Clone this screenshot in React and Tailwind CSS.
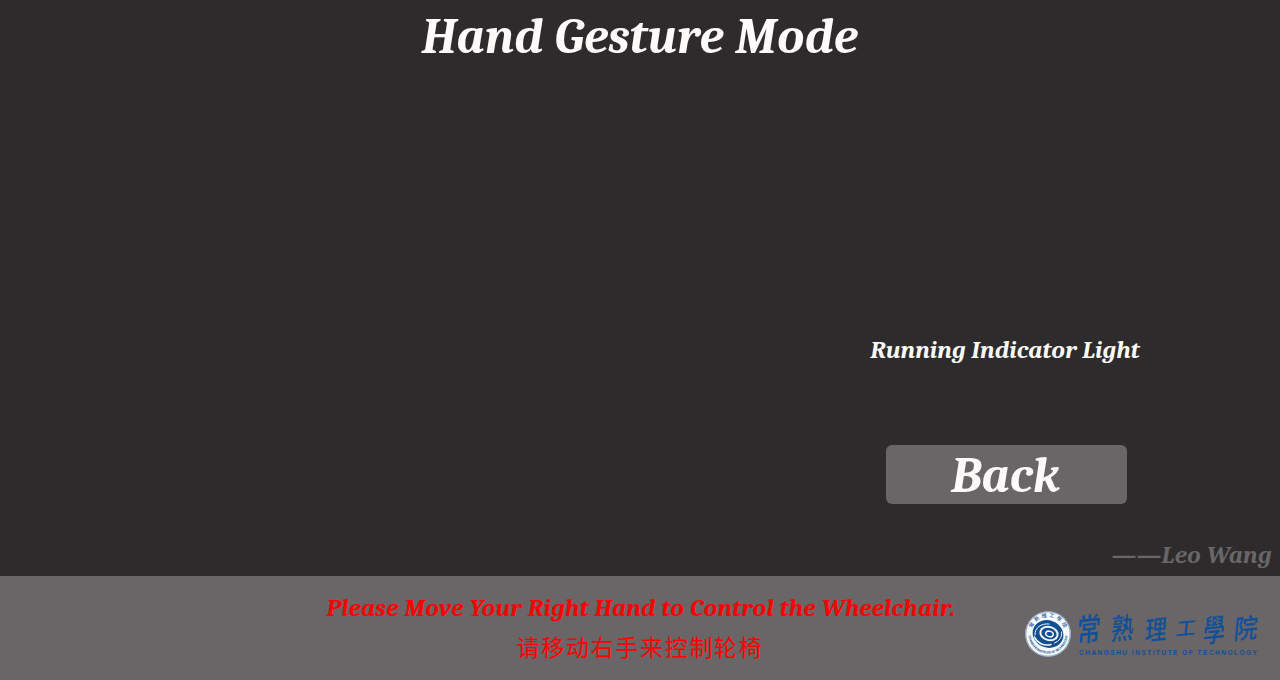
const logoChars = [
  { char: "常", style: "w-[34px] text-[24px] -rotate-6 scale-y-130" },
  { char: "熟", style: "w-[34px] text-[23px] -rotate-6 scale-y-125" },
  { char: "理", style: "w-[31px] text-[22px] -rotate-6 scale-y-120" },
  { char: "工", style: "w-[27px] text-[20px] -rotate-6 scale-y-95" },
  { char: "學", style: "w-[31px] text-[22px] -rotate-6 scale-y-140" },
  { char: "院", style: "w-[25px] text-[24px] -rotate-6 scale-y-110" },
];

function Seal() {
  return (
    <svg width="46" height="46" viewBox="0 0 46 46" className="shrink-0">
      <defs>
        <path id="sealTop" d="M6 23a17 17 0 0 1 34 0" />
        <path id="sealBottom" d="M3.400 23a19.600 19.600 0 0 0 39.200 0" />
      </defs>
      <circle cx="23" cy="23" r="22.800" fill="#f7fafc" />
      <circle cx="23" cy="23" r="22.200" fill="none" stroke="#4d7cab" strokeWidth="0.700" />
      <text fill="#17508f" fontSize="5" fontWeight="500" fontFamily="Noto Sans CJK TC, sans-serif">
        <textPath href="#sealTop" startOffset="50%" textAnchor="middle" textLength="41">常熟理工學院</textPath>
      </text>
      <text fill="#17508f" fontSize="3.300" fontWeight="700" fontFamily="Liberation Sans, sans-serif">
        <textPath href="#sealBottom" startOffset="50%" textAnchor="middle" textLength="58">CHANGSHU INSTITUTE OF TECHNOLOGY</textPath>
      </text>
      <ellipse cx="23" cy="23" rx="15.600" ry="13.600" fill="#124f90" transform="rotate(20 23 23)" />
      <g fill="none" stroke="#f4f8fb" strokeLinecap="round">
        <path d="M10 24c-.5-7 6-12 14-11" strokeWidth="1" />
        <path d="M9.500 26c2.500 6 9.500 9.500 16.500 7.500" strokeWidth="1.500" />
        <path d="M36.500 21c1 5-2 9-7 11" strokeWidth="1" />
        <ellipse cx="24" cy="22.500" rx="8.800" ry="6.600" strokeWidth="2" transform="rotate(15 24 22.500)" />
        <ellipse cx="24.500" cy="23" rx="3.800" ry="2.700" strokeWidth="1.500" transform="rotate(15 24.500 23)" />
      </g>
    </svg>
  );
}

function Logo() {
  return (
    <div className="flex h-12 items-start gap-1.5 text-[#10509a]">
      <Seal />
      <div className="w-[182px]">
        <div className="flex h-[31px] items-center font-['Noto_Sans_CJK_TC',sans-serif] leading-none font-medium">
          {logoChars.map(({ char, style }) => (
            <span key={char} className={style}>
              <span className="inline-block -skew-x-12">{char}</span>
            </span>
          ))}
        </div>
        <div className="pt-[7px] pl-0.5 font-['Liberation_Sans',sans-serif] text-[6.500px] leading-[8px] font-bold tracking-[1.5px] whitespace-nowrap">
          CHANGSHU INSTITUTE OF TECHNOLOGY
        </div>
      </div>
    </div>
  );
}

export default function App() {
  return (
    <div className="flex h-[680px] w-[1280px] flex-col overflow-hidden bg-[#2d2b2c] font-['Cambria','Caladea','Liberation_Serif',serif] font-bold text-[#fdfbf9] italic">
      <h1 className="pt-[9px] text-center text-[50px] leading-[56px] tracking-[0.2px]">Hand Gesture Mode</h1>
      <main className="flex flex-1 flex-col items-end">
        <div className="mt-[270px] mr-[137px] flex w-[273px] flex-col items-center">
          <p className="mr-[3px] text-[25px] leading-[30px] tracking-[0.1px] whitespace-nowrap">
            Running Indicator Light
          </p>
          <button className="mt-20 h-[59px] w-[241px] rounded-md bg-[#6a6566] pt-[3px] pr-[2px] text-[50px] leading-[56px]">
            Back
          </button>
        </div>
        <p className="mt-9 mr-2 flex text-[25px] leading-[30px] tracking-[0.35px] text-[#6a6566]">
          <span className="tracking-[0px]">——</span>
          <span>Leo Wang</span>
        </p>
      </main>
      <footer className="grid h-[104px] grid-cols-[1fr_628px_1fr] bg-[#6a6566]">
        <div />
        <div className="flex flex-col items-center pt-[17px] text-[#ff0000]">
          <p className="ml-0.5 text-[25px] leading-[30px] tracking-[0.22px] whitespace-nowrap">
            Please Move Your Right Hand to Control the Wheelchair.
          </p>
          <p className="mt-[7px] font-['KaiTi','Noto_Sans_CJK_SC',sans-serif] text-[23px] leading-8 font-normal tracking-[1.7px] not-italic">
            请移动右手来控制轮椅
          </p>
        </div>
        <div className="flex justify-end pt-[35px] pr-[21px] not-italic">
          <Logo />
        </div>
      </footer>
    </div>
  );
}
